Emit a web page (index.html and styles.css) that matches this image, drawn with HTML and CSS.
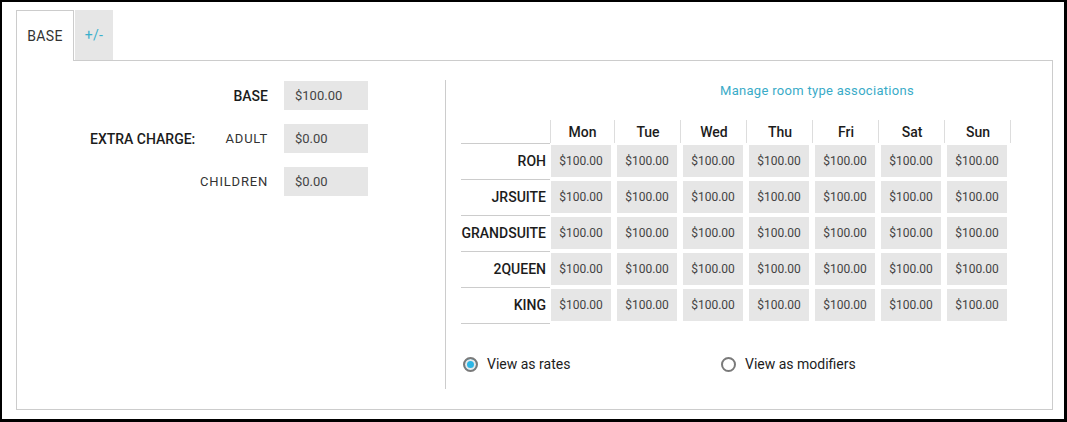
FILE: index.html
```html
<!DOCTYPE html>
<html>
<head>
    <meta charset="utf-8">
    <link rel="stylesheet" href="styles.css">
</head>
<body>
    <div class="frame">
        <div class="tabs">
            <div class="tab active">BASE</div>
            <div class="tab-rest">
                <div class="tab modifier">+/-</div>
            </div>
        </div>

        <div class="panel">
            <div class="base-form">
                <div class="form-label wide strong">BASE</div>
                <div class="input-box">$100.00</div>

                <div class="form-label strong left">EXTRA CHARGE:</div>
                <div class="form-label sub">ADULT</div>
                <div class="input-box">$0.00</div>

                <div class="form-label sub second">CHILDREN</div>
                <div class="input-box">$0.00</div>
            </div>

            <div class="rates">
                <div class="manage-link">Manage room type associations</div>

                <div class="rate-grid">
                    <div class="corner"></div>
                    <div class="day first">Mon</div>
                    <div class="day">Tue</div>
                    <div class="day">Wed</div>
                    <div class="day">Thu</div>
                    <div class="day">Fri</div>
                    <div class="day">Sat</div>
                    <div class="day">Sun</div>

                    <div class="room">ROH</div>
                    <div class="cell"><span>$100.00</span></div>
                    <div class="cell"><span>$100.00</span></div>
                    <div class="cell"><span>$100.00</span></div>
                    <div class="cell"><span>$100.00</span></div>
                    <div class="cell"><span>$100.00</span></div>
                    <div class="cell"><span>$100.00</span></div>
                    <div class="cell"><span>$100.00</span></div>

                    <div class="room">JRSUITE</div>
                    <div class="cell"><span>$100.00</span></div>
                    <div class="cell"><span>$100.00</span></div>
                    <div class="cell"><span>$100.00</span></div>
                    <div class="cell"><span>$100.00</span></div>
                    <div class="cell"><span>$100.00</span></div>
                    <div class="cell"><span>$100.00</span></div>
                    <div class="cell"><span>$100.00</span></div>

                    <div class="room">GRANDSUITE</div>
                    <div class="cell"><span>$100.00</span></div>
                    <div class="cell"><span>$100.00</span></div>
                    <div class="cell"><span>$100.00</span></div>
                    <div class="cell"><span>$100.00</span></div>
                    <div class="cell"><span>$100.00</span></div>
                    <div class="cell"><span>$100.00</span></div>
                    <div class="cell"><span>$100.00</span></div>

                    <div class="room">2QUEEN</div>
                    <div class="cell"><span>$100.00</span></div>
                    <div class="cell"><span>$100.00</span></div>
                    <div class="cell"><span>$100.00</span></div>
                    <div class="cell"><span>$100.00</span></div>
                    <div class="cell"><span>$100.00</span></div>
                    <div class="cell"><span>$100.00</span></div>
                    <div class="cell"><span>$100.00</span></div>

                    <div class="room">KING</div>
                    <div class="cell"><span>$100.00</span></div>
                    <div class="cell"><span>$100.00</span></div>
                    <div class="cell"><span>$100.00</span></div>
                    <div class="cell"><span>$100.00</span></div>
                    <div class="cell"><span>$100.00</span></div>
                    <div class="cell"><span>$100.00</span></div>
                    <div class="cell"><span>$100.00</span></div>
                </div>

                <div class="view-mode">
                    <label class="radio-option">
                        <span class="radio checked"></span>
                        View as rates
                    </label>
                    <label class="radio-option">
                        <span class="radio"></span>
                        View as modifiers
                    </label>
                </div>
            </div>
        </div>
    </div>
</body>
</html>
```

FILE: styles.css
```css
* {
    box-sizing: border-box;
}

body {
    margin: 0;
    font-family: Roboto, 'Liberation Sans', sans-serif;
    color: #222;
    background: #000;
}

.frame {
    width: 1067px;
    height: 422px;
    background: white;
    border: solid #000;
    border-width: 2px 3px 3px 2px;
    padding: 8px 0 0 14px;
}

/* tabs */
.tabs {
    display: flex;
    align-items: flex-end;
    width: 1037px;
}

.tab {
    font-size: 14px;
    letter-spacing: 0.3px;
    display: flex;
    align-items: center;
    justify-content: center;
}

.tab.active {
    width: 58px;
    height: 51px;
    border: 1px solid #ccc;
    border-bottom: none;
    color: #333;
}

.tab-rest {
    flex: 1;
    display: flex;
    border-bottom: 1px solid #ccc;
}

.tab.modifier {
    width: 38px;
    height: 50px;
    margin-left: 1px;
    background: #e6e6e6;
    color: #3ab0cc;
}

.panel {
    width: 1037px;
    height: 349px;
    border: 1px solid #ccc;
    border-top: none;
    padding: 19px 0 20px 0;
    display: flex;
}

/* left: base charges */
.base-form {
    width: 428px;
    flex-shrink: 0;
    padding: 1px 0 0 73px;
    display: grid;
    grid-template-columns: 110px 68px 84px;
    grid-auto-rows: 29px;
    row-gap: 14px;
    align-content: start;
}

.form-label {
    font-size: 14px;
    display: flex;
    align-items: center;
    justify-content: flex-end;
    white-space: nowrap;
}

.form-label.wide {
    grid-column: 1 / 3;
}

.form-label.strong {
    font-weight: 500;
    color: #1c1c1c;
}

.form-label.left {
    justify-content: flex-start;
}

.form-label.sub {
    font-size: 13px;
    letter-spacing: 0.8px;
    color: #333;
}

.form-label.second {
    grid-column: 2;
}

.input-box {
    margin-left: 16px;
    background: #e6e6e6;
    font-size: 13px;
    color: #444;
    line-height: 29px;
    padding-left: 11px;
    grid-column: 3;
    width: 84px;
}

/* right: rate table */
.rates {
    flex: 1;
    border-left: 1px solid #ccc;
    padding-left: 15px;
}

.manage-link {
    margin-left: 259px;
    line-height: 22px;
    font-size: 13px;
    letter-spacing: 0.3px;
    color: #3aabc8;
}

.rate-grid {
    margin-top: 18px;
    display: grid;
    grid-template-columns: 89px repeat(7, 66px);
    grid-template-rows: 24px;
    grid-auto-rows: 36px;
}

.corner {
    border-bottom: 1px solid #ccc;
}

.day {
    margin-right: 1px;
    border-right: 1px solid #ddd;
    font-size: 14px;
    font-weight: 500;
    color: #1c1c1c;
    text-align: center;
    padding-top: 2px;
    line-height: 21px;
    height: 23px;
}

.day.first {
    border-left: 1px solid #ddd;
}

.room {
    border-bottom: 1px solid #ccc;
    font-size: 14px;
    font-weight: 500;
    color: #1c1c1c;
    text-align: right;
    padding-right: 4px;
    line-height: 35px;
}

.cell {
    padding: 1px 5px 3px 1px;
}

.cell span {
    display: block;
    height: 32px;
    line-height: 32px;
    background: #e6e6e6;
    font-size: 12px;
    color: #444;
    text-align: center;
}

/* view mode radios */
.view-mode {
    margin-top: 30px;
    padding-left: 2px;
    display: grid;
    grid-template-columns: 258px auto;
}

.radio-option {
    display: flex;
    align-items: center;
    gap: 9px;
    height: 20px;
    font-size: 14px;
    color: #1c1c1c;
}

.radio {
    width: 15px;
    height: 15px;
    border-radius: 50%;
    border: 2px solid #7a7a7a;
    background: white;
}

.radio.checked {
    background: #2cb6e6;
    box-shadow: inset 0 0 0 2px #e8e8e8;
}
```
